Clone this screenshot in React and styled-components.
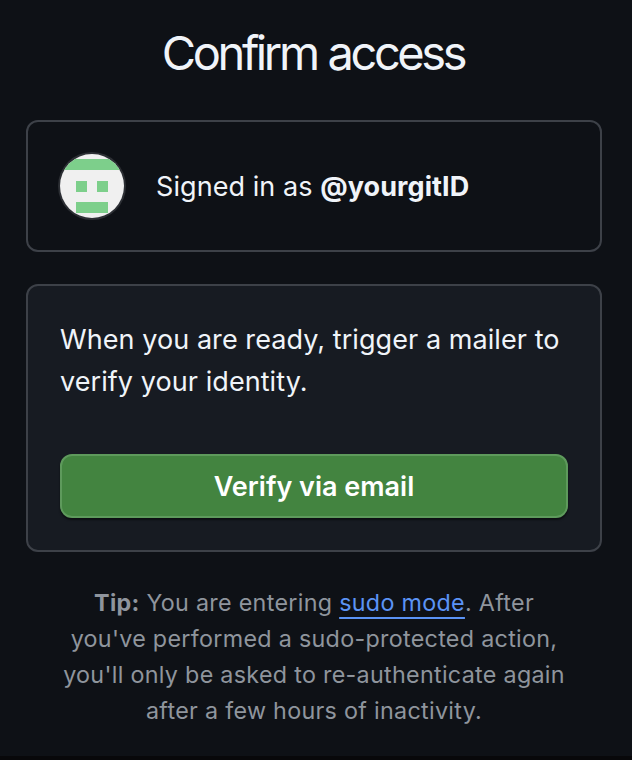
import React from "react";
import styled, { createGlobalStyle } from "styled-components";

const Global = createGlobalStyle`
  * { box-sizing: border-box; }
  body { margin: 0; background: #0e1116; font-family: Inter, "Liberation Sans", sans-serif; }
  b { font-weight: 600; }
`;
const Page = styled.main`
  width: 632px; height: 760px; padding: 26px 30px 0 26px;
  display: flex; flex-direction: column;
  background: #0e1116; color: #f0f4f9;
  border-bottom: 4px solid #08080a;
  overflow: hidden;
`;
const Title = styled.h1`
  margin: 0 0 40px; height: 54px; line-height: 54px; text-align: center;
  font-size: 47px; font-weight: 400; letter-spacing: -3.4px; word-spacing: 1px; white-space: nowrap;
  padding-right: 2px;
`;
const Card = styled.section`
  border: 2px solid #3d4148; border-radius: 12px;
`;
const Account = styled(Card)`
  height: 132px; padding: 0 32px; display: flex; align-items: center; gap: 30px;
`;
const Avatar = styled.svg`
  width: 68px; height: 68px; flex: none; margin-left: -2px;
`;
const Signed = styled.p`
  margin: 0; padding-top: 2px; font-size: 27px; line-height: 42px; white-space: nowrap; letter-spacing: 0.07px;
  b { font-weight: 700; }
`;
const Verify = styled(Card)`
  margin-top: 32px; height: 268px; padding: 33px 32px 32px; background: #171b22;
  display: flex; flex-direction: column; justify-content: space-between;
`;
const Message = styled.p`
  margin: 0; font-size: 27px; line-height: 42px; white-space: nowrap; letter-spacing: 0.07px;
`;
const Button = styled.button`
  height: 64px; width: 100%; padding: 2px 0 0; border: 2px solid #5e9a5c; border-radius: 12px;
  background: #438440; color: #fff; font: 600 27px/40px Inter, sans-serif;
  letter-spacing: 0; box-shadow: 0 2px 2px rgba(0,0,0,.5);
`;
const Tip = styled.p`
  margin: 33px 0 0; text-align: center; color: #8f959d;
  font-size: 23.3px; line-height: 36px; white-space: nowrap; letter-spacing: 0.3px;
  b { font-weight: 700; }
`;
const Link = styled.a`
  color: #5b93f5; text-decoration: underline; text-decoration-thickness: 2px;
  text-underline-offset: 6px; text-decoration-skip-ink: none;
`;

export default function App() {
  return (
    <>
      <Global />
      <Page>
        <Title>Confirm access</Title>
        <Account>
          <Avatar viewBox="0 0 68 68">
            <defs><clipPath id="round"><circle cx="34" cy="34" r="32" /></clipPath></defs>
            <circle cx="34" cy="34" r="34" fill="#2c2f34" />
            <g clipPath="url(#round)">
              <rect width="68" height="68" fill="#f0f0f0" />
              <path fill="#7dcf8b" d="M2 7h64v11H2zM18 29h11v11H18zM39 29h11v11H39zM18 50h32v11H18z" />
            </g>
          </Avatar>
          <Signed>Signed in as <b>@yourgitID</b></Signed>
        </Account>
        <Verify>
          <Message>When you are ready, trigger a mailer to<br />verify your identity.</Message>
          <Button>Verify via email</Button>
        </Verify>
        <Tip>
          <b>Tip:</b> You are entering <Link>sudo mode</Link>. After<br />
          you've performed a sudo-protected action,<br />
          you'll only be asked to re-authenticate again<br />
          after a few hours of inactivity.
        </Tip>
      </Page>
    </>
  );
}
